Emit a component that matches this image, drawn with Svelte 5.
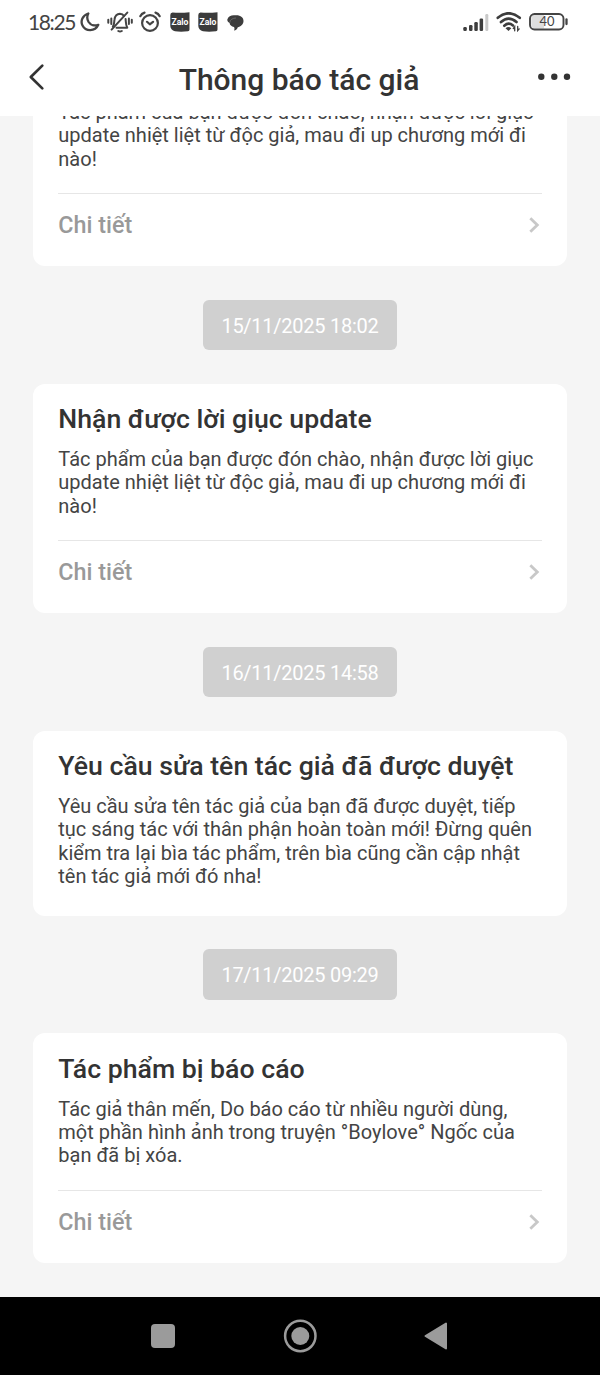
<script>
  const nudge = {
    lines: [
      'Tác phẩm của bạn được đón chào, nhận được lời giục',
      'update nhiệt liệt từ độc giả, mau đi up chương mới đi',
      'nào!'
    ],
    detail: true
  };

  const messages = [
    nudge,
    { ...nudge, time: '15/11/2025 18:02', title: 'Nhận được lời giục update' },
    {
      time: '16/11/2025 14:58',
      title: 'Yêu cầu sửa tên tác giả đã được duyệt',
      lines: [
        'Yêu cầu sửa tên tác giả của bạn đã được duyệt, tiếp',
        'tục sáng tác với thân phận hoàn toàn mới! Đừng quên',
        'kiểm tra lại bìa tác phẩm, trên bìa cũng cần cập nhật',
        'tên tác giả mới đó nha!'
      ],
      detail: false
    },
    {
      time: '17/11/2025 09:29',
      title: 'Tác phẩm bị báo cáo',
      lines: [
        'Tác giả thân mến, Do báo cáo từ nhiều người dùng,',
        'một phần hình ảnh trong truyện °Boylove° Ngốc của',
        'bạn đã bị xóa.'
      ],
      detail: true
    }
  ];
</script>

{#snippet zalo()}
  <svg class="zalo" width="20" height="20" viewBox="0 0 20 20">
    <path d="M2.5 .5Q10 1.3 19.5 .3V17.5Q19.500 19 18 19.300Q10 20 5 19.200Q.5 18 .3 14V3Q.3 .8 2.500 .5Z" fill="#3b3b3b" />
    <text x="10" y="12.800" text-anchor="middle" textLength="17" lengthAdjust="spacingAndGlyphs">Zalo</text>
  </svg>
{/snippet}

<div class="screen">
  <div class="status">
    <span class="clock">18:25</span>
    <svg class="moon" width="20" height="20" viewBox="0 0 20 20" fill="none" stroke="#444" stroke-width="2.300" stroke-linejoin="round">
      <path d="M8.300 1.500C2.500 3.500 .2 9 2.500 13.500C5.500 19.500 15 20 18.300 12.800C14.500 14.200 10.500 13 8.600 10C6.800 7 7 4 8.300 1.500Z" />
    </svg>
    <svg class="bell" width="26" height="22" viewBox="0 0 26 22" fill="none" stroke="#444" stroke-width="2" stroke-linecap="round" stroke-linejoin="round">
      <path d="M5.800 15.800C7.500 13.500 7 11 7.500 8.500C8 5 10 3 13 2.800C14.800 2.800 16.200 3.600 17 5M18.600 8C18.900 11 18.600 13.500 20.300 16.700H9.500" />
      <path d="M4.600 18.600L20.300 1.600M11.300 20Q13 21 14.800 20M4.300 7.500V13M1.300 8.700V11.700M21.900 7.500V13M24.800 8.700V11.700" />
    </svg>
    <svg class="alarm" width="22" height="22" viewBox="0 0 22 22" fill="none" stroke="#444" stroke-width="2.200" stroke-linecap="round" stroke-linejoin="round">
      <circle cx="11" cy="12" r="7.900" />
      <path d="M1.300 5.200Q2.500 2.500 5.500 1.600M20.700 5.200Q19.500 2.500 16.500 1.600M8 10.800L10.800 13.300L14 10.800" />
    </svg>
    {@render zalo()}
    {@render zalo()}
    <svg class="chat" width="17" height="18" viewBox="0 0 17 18" fill="#3d3d3d">
      <path d="M.3 5.500C1.500 1.500 5 .8 8.500 1.300C13.500 1 16.700 3.600 16.500 7.200C16.300 10.500 13.500 12.500 10.800 13.200C10.300 14.800 9 16.300 7 16.500C7.800 15 7.500 13.800 7 13C4.500 12.500 2.700 11 2.600 9C1 8.200 .2 7 .3 5.500Z" />
      <path d="M2.700 8.800C3 5.500 6 4 9 4" fill="none" stroke="#777" stroke-width=".7" />
    </svg>
    <svg class="signal" width="27" height="18" viewBox="0 0 27 18" fill="#3d3d3d">
      <rect x=".3" y="13" width="3.500" height="4" rx="1.200" />
      <rect x="6" y="11" width="3.500" height="6" rx="1.200" />
      <rect x="11.300" y="8" width="3.500" height="9" rx="1.200" />
      <rect x="16.600" y="4.500" width="3.500" height="12.500" rx="1.200" />
      <rect x="22.300" y="0" width="3" height="17" rx="1.200" fill="#c9c9c9" />
    </svg>
    <svg class="wifi" width="26" height="20" viewBox="0 0 26 20" fill="none" stroke="#3d3d3d" stroke-width="2.700" stroke-linecap="round">
      <path d="M1.800 5.800Q12.500-3.200 23.700 5.800M5 10Q12.500 3.200 20.500 10M8.300 13.700Q12.500 9.800 17 13.500" />
      <path d="M9.500 16.200Q12.500 14 15.300 16.200L12.500 19Z" fill="#3d3d3d" stroke="none" />
      <path d="M18.700 18.800V14.800L17.300 16.500M21.700 14.500V18.600L23.200 16.900" stroke-width="1.300" />
    </svg>
    <svg class="battery" width="40" height="18" viewBox="0 0 40 18">
      <path d="M5 2H15V15.600H5Q2.300 15 2.300 12V5Q2.300 2 5 2Z" fill="#dedede" />
      <rect x="1" y="1" width="33.500" height="15.500" rx="4.500" fill="none" stroke="#444" stroke-width="1.900" />
      <path d="M37.500 6.500V11" stroke="#444" stroke-width="2.300" stroke-linecap="round" />
      <text x="18" y="13" text-anchor="middle" textLength="15" lengthAdjust="spacingAndGlyphs">40</text>
    </svg>
  </div>

  <header>
    <svg class="back" width="18" height="28" viewBox="0 0 18 28" fill="none" stroke="#333" stroke-width="2.700" stroke-linecap="round" stroke-linejoin="round">
      <path d="M15.300 2.600L3.800 14L15.300 25.400" />
    </svg>
    <h1>Thông báo tác giả</h1>
    <svg class="more" width="34" height="8" viewBox="0 0 34 8" fill="#333">
      <circle cx="4.300" cy="3.700" r="3.200" /><circle cx="17.300" cy="3.700" r="3.200" /><circle cx="30" cy="3.700" r="3.200" />
    </svg>
  </header>

  <main>
    {#each messages as m}
      {#if m.time}<time>{m.time}</time>{/if}
      <article>
        {#if m.title}<h2>{m.title}</h2>{/if}
        <p>{#each m.lines as line}<span>{line}</span>{/each}</p>
        {#if m.detail}
          <div class="detail">
            <span>Chi tiết</span>
            <svg width="14" height="18" viewBox="0 0 14 18" fill="none" stroke="#c8c8c8" stroke-width="2.800">
              <path d="M2.300 2.300L9.300 9L2.300 15.700" />
            </svg>
          </div>
        {/if}
      </article>
    {/each}
  </main>

  <nav>
    <svg width="26" height="36" viewBox="0 0 26 36"><rect x="1" y="6" width="24" height="24" rx="4" fill="#9b9b9b" /></svg>
    <svg width="36" height="36" viewBox="0 0 36 36"><circle cx="18.300" cy="18" r="15.200" fill="none" stroke="#9b9b9b" stroke-width="2.500" /><circle cx="18.300" cy="18" r="9" fill="#9b9b9b" /></svg>
    <svg width="26" height="36" viewBox="0 0 26 36"><path d="M2.500 18L23 5.500V30.500Z" fill="#9b9b9b" stroke="#9b9b9b" stroke-width="2" stroke-linejoin="round" /></svg>
  </nav>
</div>

<style>
  :global(body) { margin: 0; background: #f5f5f5; }
  .screen {
    display: flex;
    flex-direction: column;
    width: 600px;
    height: 1375px;
    overflow: hidden;
    background: #f5f5f5;
    color: #333;
    font-family: Roboto, sans-serif;
  }
  svg { display: block; flex: none; }
  .status {
    display: flex;
    align-items: center;
    flex: none;
    box-sizing: border-box;
    height: 44px;
    padding: 0 31px 0 28px;
    background: #fff;
  }
  .clock {
    width: 52px;
    font: 400 21px/46px Lato, sans-serif;
    letter-spacing: -1.400px;
    color: #444;
    white-space: nowrap;
  }
  .bell { margin-left: 7px; }
  .alarm { margin: 0 9px 0 6px; }
  .zalo { margin-right: 8px; }
  .zalo text { font: 700 8.500px Roboto, sans-serif; fill: #fff; }
  .chat { margin: 2px 0 0 1px; }
  .signal { margin: 2px 6px 0 auto; }
  .wifi { margin-right: 7px; }
  .battery text { font: 400 12.500px Lato, sans-serif; fill: #444; }
  header {
    display: flex;
    align-items: center;
    justify-content: space-between;
    flex: none;
    box-sizing: border-box;
    height: 72px;
    padding: 0 29px 0 27px;
    background: #fff;
  }
  .back { margin: 0 16px 6px 0; }
  .more { margin-bottom: 6px; }
  h1 { margin: 0; font-size: 30px; font-weight: 500; line-height: 36px; }
  main {
    display: flex;
    flex: 1;
    min-height: 0;
    flex-direction: column;
    align-items: center;
    justify-content: flex-end;
    gap: 33.330px;
    overflow: hidden;
    padding-bottom: 33.600px;
  }
  time {
    flex: none;
    width: 193.500px;
    height: 50.700px;
    border-radius: 6px;
    background: #d0d0d0;
    color: #fff;
    font-size: 20px;
    letter-spacing: -.250px;
    line-height: 53px;
    text-align: center;
  }
  article {
    flex: none;
    box-sizing: border-box;
    width: 533.400px;
    padding: 20.400px 25px 0;
    border-radius: 12px;
    background: #fff;
  }
  h2 { margin: 0 0 12.500px; font-size: 26.670px; font-weight: 500; line-height: 31.250px; }
  p { margin: 0; padding-bottom: 27.500px; font-size: 20px; line-height: 23.440px; color: #444; }
  p span { display: block; white-space: nowrap; }
  p:has(+ .detail) { padding-bottom: 22.200px; }
  .detail {
    display: flex;
    align-items: center;
    justify-content: space-between;
    box-sizing: border-box;
    height: 73px;
    padding-bottom: 10.500px;
    border-top: 1px solid #e6e6e6;
    color: #999;
    font-size: 23.330px;
    font-weight: 500;
  }
  nav {
    display: flex;
    align-items: center;
    justify-content: space-between;
    flex: none;
    box-sizing: border-box;
    height: 78.300px;
    padding: 0 151px 0 150px;
    background: #000;
  }
</style>
